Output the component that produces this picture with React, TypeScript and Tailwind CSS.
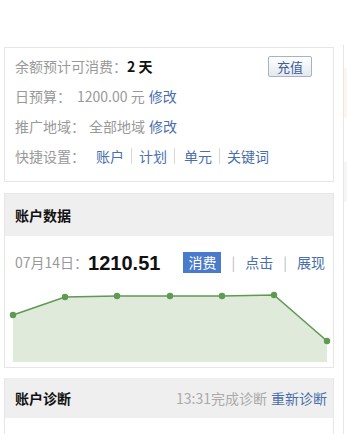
import React from 'react';

const font = { fontFamily: '"Noto Sans CJK SC", "Liberation Sans", sans-serif' };

function Sep() {
  return <span className="mx-[7px] inline-block h-[16px] w-px bg-[#d8d8d8] align-middle" />;
}

function AccountSummary() {
  return (
    <div className="border border-[#e6e6e6] bg-white px-[10px] pt-[3px] pb-[10px] text-[14px] text-[#999]">
      <div className="flex h-[30px] items-center justify-between">
        <div>
          余额预计可消费：<span className="font-bold text-[#111]">2 天</span>
        </div>
        <button className="mr-[11px] h-[21px] w-[44px] rounded-[2px] border border-[#a9b3c0] bg-gradient-to-b from-white to-[#e4e8ee] text-[13px] leading-none text-[#3b5f9a]">
          充值
        </button>
      </div>
      <div className="flex h-[30px] items-center">
        日预算：<span className="ml-[6px]">1200.00 元</span>
        <a className="ml-[4px] text-[#4a6fab]">修改</a>
      </div>
      <div className="flex h-[30px] items-center">
        推广地域：<span className="ml-[4px]">全部地域</span>
        <a className="ml-[4px] text-[#4a6fab]">修改</a>
      </div>
      <div className="flex h-[30px] items-center">
        快捷设置：
        <span className="ml-[11px] text-[#4a6fab]">账户</span>
        <Sep />
        <span className="text-[#4a6fab]">计划</span>
        <Sep />
        <span className="ml-[2px] text-[#4a6fab]">单元</span>
        <Sep />
        <span className="text-[#4a6fab]">关键词</span>
      </div>
    </div>
  );
}

const pts: [number, number][] = [
  [8, 29],
  [60, 11],
  [112, 10],
  [165, 10],
  [217, 10],
  [269, 9],
  [322, 55],
];

function Chart() {
  const line = pts.map((p) => p.join(',')).join(' ');
  const area = `8,76 ${line} 322,76`;
  return (
    <svg width="328" height="81" viewBox="0 0 328 81" className="block">
      <polygon points={area} fill="#dfeadb" />
      <polyline points={line} fill="none" stroke="#5e9a52" strokeWidth="1.6" />
      {pts.map(([x, y], i) => (
        <circle key={i} cx={x} cy={y} r="3.2" fill="#5e9a52" />
      ))}
    </svg>
  );
}

function AccountData() {
  return (
    <div className="mt-[11px] border border-[#e6e6e6] bg-white">
      <div className="flex h-[42px] items-center bg-[#efefef] px-[10px] text-[14px] font-bold text-[#111]">
        账户数据
      </div>
      <div className="flex h-[50px] items-center px-[10px] pt-[3px] text-[14px] text-[#999]">
        <span>07月14日：</span>
        <span className="text-[20px] font-bold text-[#111]" style={{ fontFamily: '"Liberation Sans", sans-serif' }}>
          1210.51
        </span>
        <span className="ml-auto bg-[#4a7acb] px-[5px] leading-[21px] text-white">消费</span>
        <span className="mx-[10px] text-[#bbb]">|</span>
        <span className="text-[#4a6fab]">点击</span>
        <span className="mx-[10px] text-[#bbb]">|</span>
        <span className="mr-[-2px] text-[#4a6fab]">展现</span>
      </div>
      <Chart />
    </div>
  );
}

function Diagnosis() {
  return (
    <div className="mt-[10px] border-x border-[#e6e6e6] bg-white">
      <div className="flex h-[40px] items-center bg-[#efefef] px-[10px] text-[14px]">
        <span className="font-bold text-[#111]">账户诊断</span>
        <span className="ml-auto text-[#aaa]">13:31完成诊断</span>
        <span className="ml-[4px] mr-[-4px] text-[#4a6fab]">重新诊断</span>
      </div>
      <div className="h-[20px]" />
    </div>
  );
}

export default function App() {
  return (
    <div className="flex h-[434px] w-[347px] overflow-hidden bg-white" style={font}>
      <div className="ml-[4px] w-[330px] pt-[47px]">
        <AccountSummary />
        <AccountData />
        <Diagnosis />
      </div>
      <div className="ml-[9px] mt-[45px] flex-1 border-l border-[#e6e6e6]">
        <div className="mt-[23px] h-[50px] bg-[#fdf6ea]" />
        <div className="mt-[44px] h-[40px] bg-[#f6f6f6]" />
      </div>
    </div>
  );
}
